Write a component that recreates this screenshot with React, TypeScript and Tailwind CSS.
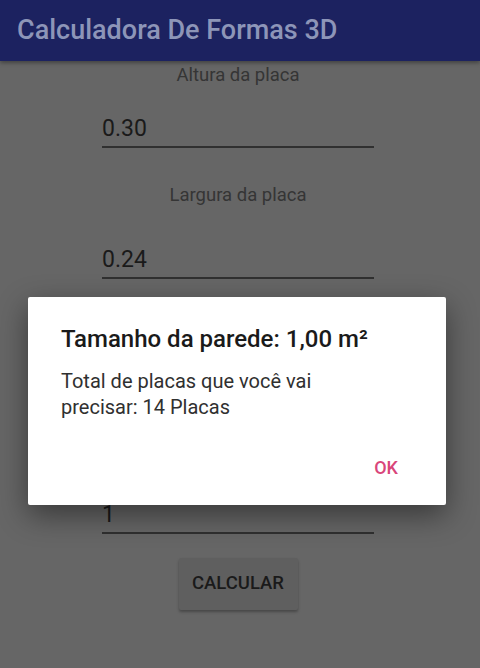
type FieldProps = {
  label: string;
  value: string;
  labelTop: string;
  valueTop: string;
};

const FIELDS: FieldProps[] = [
  { label: "Altura da placa", value: "0.30", labelTop: "mt-[3px]", valueTop: "mt-[29px]" },
  { label: "Largura da placa", value: "0.24", labelTop: "mt-[36px]", valueTop: "mt-[40px]" },
];

function ValueLine({ value, top }: { value: string; top: string }) {
  return (
    <div className={`${top} w-[272px] pb-[3px] border-b-2 border-[#303030] text-[23px] leading-[28px] text-[#1a1a1a]`}>
      {value}
    </div>
  );
}

function Field({ label, value, labelTop, valueTop }: FieldProps) {
  return (
    <div className="flex flex-col items-center w-full">
      <span className={`${labelTop} text-[18.5px] leading-[22px] text-[#353535]`}>{label}</span>
      <ValueLine value={value} top={valueTop} />
    </div>
  );
}

export default function App() {
  return (
    <div
      className="relative w-[480px] h-[668px] overflow-hidden bg-[#666666]"
      style={{ fontFamily: "Roboto, 'Noto Sans', sans-serif" }}
    >
      {/* App bar */}
      <header className="relative z-10 h-[61px] bg-[#1c2260] flex items-center pl-[17px] shadow-[0_2px_4px_rgba(0,0,0,0.35)]">
        <h1 className="text-[27px] font-medium text-[#8d95b8]">Calculadora De Formas 3D</h1>
      </header>

      {/* Form (the middle fields sit under the dialog) */}
      <main className="flex flex-col items-center pr-[4px]">
        {FIELDS.map((f) => (
          <Field key={f.label} {...f} />
        ))}
        <ValueLine value="1" top="mt-[222px]" />
        <button className="mt-[24px] w-[119px] h-[52px] rounded-[2px] bg-[#5f5f5f] shadow-[0_2px_3px_rgba(0,0,0,0.3)] text-[18.5px] font-medium text-[#1a1a1a]">
          CALCULAR
        </button>
      </main>

      {/* Dialog */}
      <div className="absolute left-[28px] top-[297px] w-[418px] h-[208px] bg-white rounded-[2px] shadow-[0_10px_30px_rgba(0,0,0,0.45)] flex flex-col pl-[33px]">
        <h2 className="mt-[28px] text-[24px] leading-[28px] font-medium text-[#1a1a1a]">
          Tamanho da parede: 1,00 m²
        </h2>
        <p className="mt-[15px] w-[290px] text-[20px] leading-[26px] text-[#303030]">
          Total de placas que você vai precisar: 14 Placas
        </p>
        <div className="mt-auto mb-[26px] flex justify-end pr-[48px]">
          <span className="text-[18px] leading-[22px] font-medium text-[#d9457a]">OK</span>
        </div>
      </div>
    </div>
  );
}
